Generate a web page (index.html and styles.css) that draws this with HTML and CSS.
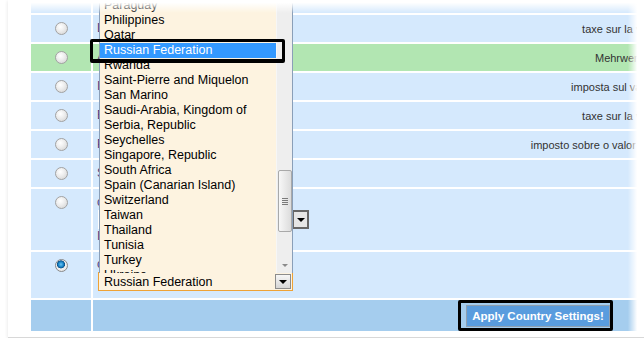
FILE: index.html
```html
<!DOCTYPE html>
<html lang="en">
<head>
  <meta charset="UTF-8">
  <title>Country Settings</title>
  <link rel="stylesheet" href="styles.css">
</head>
<body>
  <div class="card">
    <div class="table">
      <div class="row cut">
        <div class="cell pick"></div>
        <div class="cell info"></div>
      </div>
      <div class="row">
        <div class="cell pick"><span class="radio"></span></div>
        <div class="cell info"><span class="name">Luxembourg</span><span class="vat">taxe sur la valeur ajoutée</span></div>
      </div>
      <div class="row ok">
        <div class="cell pick"><span class="radio"></span></div>
        <div class="cell info"><span class="name">Austria</span><span class="vat">Mehrwertsteuer MwSt.</span></div>
      </div>
      <div class="row">
        <div class="cell pick"><span class="radio"></span></div>
        <div class="cell info"><span class="name">Italia</span><span class="vat">imposta sul valore aggiunto</span></div>
      </div>
      <div class="row">
        <div class="cell pick"><span class="radio"></span></div>
        <div class="cell info"><span class="name">Belgique</span><span class="vat">taxe sur la valeur ajoutée</span></div>
      </div>
      <div class="row">
        <div class="cell pick"><span class="radio"></span></div>
        <div class="cell info"><span class="name">Portugal</span><span class="vat">imposto sobre o valor acrescentado</span></div>
      </div>
      <div class="row">
        <div class="cell pick"><span class="radio"></span></div>
        <div class="cell info"><span class="name">Sweden</span></div>
      </div>
      <div class="row tall">
        <div class="cell pick"><span class="radio"></span></div>
        <div class="cell info stack">
          <span class="name">choose country:</span>
          <div class="combo behind">
            <span class="combo-text"></span>
            <span class="drop-btn dark"><i class="tri"></i></span>
          </div>
          <span class="name">Intra-EU</span>
        </div>
      </div>
      <div class="row mid">
        <div class="cell pick"><span class="radio on"></span></div>
        <div class="cell info stack">
          <span class="name">custom:</span>
          <div class="combo open">
            <span class="combo-text">Russian Federation</span>
            <span class="drop-btn"><i class="tri"></i></span>
            <div class="popup">
              <div class="options">
                <div class="opt">Panama</div>
                <div class="opt">Paraguay</div>
                <div class="opt">Philippines</div>
                <div class="opt">Qatar</div>
                <div class="opt on">Russian Federation</div>
                <div class="opt">Rwanda</div>
                <div class="opt">Saint-Pierre and Miquelon</div>
                <div class="opt">San Marino</div>
                <div class="opt">Saudi-Arabia, Kingdom of</div>
                <div class="opt">Serbia, Republic</div>
                <div class="opt">Seychelles</div>
                <div class="opt">Singapore, Republic</div>
                <div class="opt">South Africa</div>
                <div class="opt">Spain (Canarian Island)</div>
                <div class="opt">Switzerland</div>
                <div class="opt">Taiwan</div>
                <div class="opt">Thailand</div>
                <div class="opt">Tunisia</div>
                <div class="opt">Turkey</div>
                <div class="opt">Ukraine</div>
              </div>
              <div class="bar">
                <span class="thumb"><i></i><i></i><i></i><i></i></span>
                <span class="bar-down"><i class="tri small"></i></span>
              </div>
              <span class="mark opt-mark"></span>
            </div>
          </div>
        </div>
      </div>
      <div class="row foot">
        <div class="cell pick"></div>
        <div class="cell info">
          <span class="apply-wrap">
            <button class="apply">Apply Country Settings!</button>
            <span class="mark"></span>
          </span>
        </div>
      </div>
    </div>
    <div class="fade-top"></div>
    <div class="fade-right"></div>
  </div>
</body>
</html>
```

FILE: styles.css
```css
*{
  margin: 0;
  padding: 0;
  box-sizing: border-box;
}
body{
  background: #fff;
  overflow: hidden;
  font-family: "Liberation Sans", Arial, sans-serif;
}
.card{
  position: relative;
  margin-left: 8px;
  width: 636px;
  padding: 0 0 6px 23px;
  background: #fff;
  border-bottom: 1px solid #d8d8d8;
  box-shadow: -1px 1px 3px rgba(0,0,0,.07);
  overflow: hidden;
}
.table{
  display: flex;
  flex-direction: column;
  gap: 2px;
  width: 674px;
}
.row{
  display: grid;
  grid-template-columns: 60px 1fr;
  column-gap: 2px;
  height: 27px;
}
.row.cut{ height: 13px; }
.row.tall{ height: 61px; }
.row.mid{ height: 46px; }
.row.foot{ height: 31px; }
.cell{
  background: #d5e9fd;
}
.row.ok .cell{ background: #b2e6b2; }
.row.foot .cell{ background: #a5cdee; }

/* radio column */
.pick{
  display: flex;
  justify-content: center;
  padding-top: 7px;
}
.radio{
  width: 13px;
  height: 13px;
  border-radius: 50%;
  border: 1px solid #a2a2a2;
  background: radial-gradient(circle at 40% 35%, #fff 0, #ececec 45%, #cfcfcf 100%);
}
.radio.on{
  border-color: #8a8a8a;
  background: radial-gradient(circle at 45% 40%, #6cc4f4 0, #1a86c8 28%, #0b4f86 42%, #f2f2f2 48%, #dadada 100%);
}

/* text column */
.info{
  display: flex;
  align-items: center;
  justify-content: space-between;
  padding-left: 4px;
}
.info.stack{
  flex-direction: column;
  align-items: flex-start;
  justify-content: flex-start;
  padding-top: 6px;
}
.row.mid .info.stack{ padding-top: 5px; }
.name{
  font-size: 12px;
  line-height: 15px;
  color: #4d3a7a;
  white-space: nowrap;
}
.vat{
  font-size: 11px;
  color: #333;
  white-space: nowrap;
}

/* selects */
.combo{
  position: relative;
  display: flex;
  align-items: center;
  justify-content: space-between;
  width: 195px;
  height: 19px;
  margin-left: 1px;
  border: 1px solid #eea236;
  background: #fdf3e0;
}
.combo.behind{
  width: 211px;
  border: 0;
  background: #fff;
}
.combo-text{
  padding-left: 5px;
  font-size: 12.5px;
  color: #000;
}
.drop-btn{
  display: flex;
  align-items: center;
  justify-content: center;
  width: 16px;
  height: 15px;
  margin-right: 1px;
  border: 1px solid #8c8c8c;
  background: linear-gradient(#f6f6f6, #d6d6d6);
}
.drop-btn.dark{
  width: 17px;
  height: 19px;
  margin-right: 0;
  border: 2px solid #676767;
  background: #e6e6e6;
}
.tri{
  width: 0;
  height: 0;
  border-left: 4px solid transparent;
  border-right: 4px solid transparent;
  border-top: 4px solid #000;
}
.tri.small{
  border-left-width: 3px;
  border-right-width: 3px;
  border-top: 3px solid #8a8a8a;
}

/* open list */
.popup{
  position: absolute;
  left: 0;
  bottom: 100%;
  width: 194px;
  height: 290px;
  display: flex;
  border-left: 1px solid #8a9fb8;
  border-right: 1px solid #8a9fb8;
  background: #fdf3e0;
  z-index: 5;
}
.options{
  flex: 1;
  overflow: hidden;
}
.opt{
  height: 15px;
  line-height: 15px;
  padding-left: 4px;
  font-size: 12.5px;
  color: #000;
  white-space: nowrap;
}
.opt.on{
  background: #3399ff;
  color: #fff;
}
.bar{
  width: 16px;
  display: flex;
  flex-direction: column;
  align-items: center;
  background: #eeeeee;
  border-left: 1px solid #f6f6f6;
}
.thumb{
  display: flex;
  flex-direction: column;
  align-items: center;
  justify-content: center;
  gap: 1px;
  margin-top: 187px;
  width: 14px;
  height: 62px;
  border: 1px solid #a9a9a9;
  border-radius: 2px;
  background: linear-gradient(to right, #f7f7f7, #dcdcdc);
}
.thumb i{
  display: block;
  width: 6px;
  height: 1px;
  background: #7a7a7a;
}
.bar-down{
  display: flex;
  align-items: center;
  justify-content: center;
  margin-top: auto;
  height: 16px;
}

/* annotation frames */
.mark{
  position: absolute;
  border: 3px solid #000;
  border-radius: 2px;
  pointer-events: none;
}
.opt-mark{
  left: -10px;
  top: 56px;
  width: 195px;
  height: 24px;
  border-bottom-width: 4px;
}
.row.foot .info{
  justify-content: flex-end;
  padding-right: 95px;
}
.apply-wrap{
  position: relative;
  display: flex;
}
.apply-wrap .mark{
  left: -8px;
  top: -5px;
  right: -3px;
  bottom: -4px;
}
.apply{
  width: 144px;
  height: 22px;
  border: 1px solid #8e9fb0;
  background: #599cde;
  color: #fff;
  font-family: "Liberation Sans", Arial, sans-serif;
  font-weight: bold;
  font-size: 11.5px;
}

/* screenshot fades */
.fade-top{
  position: absolute;
  left: 0;
  right: 0;
  top: 0;
  height: 13px;
  background: linear-gradient(#fff 20%, rgba(255,255,255,0));
  z-index: 10;
}
.fade-right{
  position: absolute;
  top: 0;
  right: 0;
  bottom: -1px;
  width: 18px;
  background: linear-gradient(to right, rgba(255,255,255,0) 10%, #fff 62%);
  z-index: 10;
}
```
